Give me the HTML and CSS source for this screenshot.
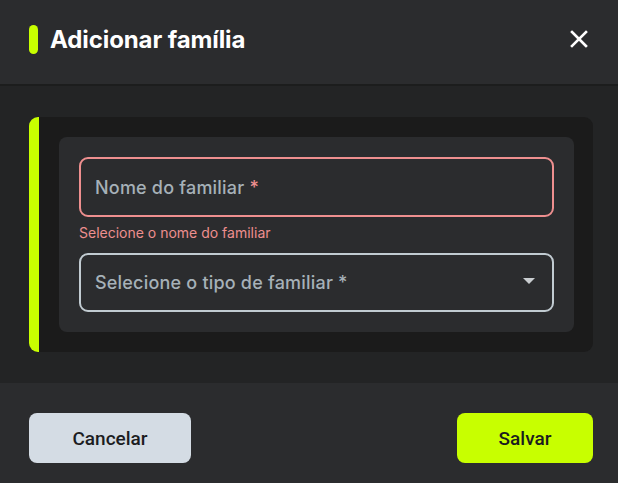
FILE: index.html
```html
<!DOCTYPE html>
<html lang="pt-BR">
<head>
<meta charset="utf-8">
<title>Adicionar família</title>
<link rel="stylesheet" href="styles.css">
</head>
<body>
<div class="dialog">
  <header class="dialog-header">
    <div class="title-wrap">
      <span class="title-pill"></span>
      <h1 class="title">Adicionar família</h1>
    </div>
    <button class="close-btn" aria-label="Fechar">
      <svg width="18" height="18" viewBox="0 0 18 18"><path d="M2 2 L16 16 M16 2 L2 16" stroke="#ffffff" stroke-width="2.6" stroke-linecap="square" fill="none"/></svg>
    </button>
  </header>
  <main class="dialog-body">
    <section class="card">
      <div class="panel">
        <div class="field field-error">
          <span class="field-label">Nome do familiar <span class="req">*</span></span>
        </div>
        <p class="helper">Selecione o nome do familiar</p>
        <div class="field field-select">
          <span class="field-label">Selecione o tipo de familiar *</span>
          <span class="caret"></span>
        </div>
      </div>
    </section>
  </main>
  <footer class="dialog-footer">
    <button class="btn btn-cancel">Cancelar</button>
    <button class="btn btn-save">Salvar</button>
  </footer>
</div>
</body>
</html>
```
FILE: styles.css
```css
* { box-sizing: border-box; }
html, body { margin: 0; padding: 0; }
body {
  width: 618px;
  height: 483px;
  background: #2b2c2e;
  font-family: Inter, "Noto Sans", sans-serif;
  overflow: hidden;
}
.dialog { display: flex; flex-direction: column; height: 483px; }
.dialog-header {
  height: 86px;
  background: #2b2c2e;
  border-bottom: 2px solid #1c1d1d;
  display: flex;
  align-items: center;
  justify-content: space-between;
  padding: 0 30px 6px 29px;
}
.title-wrap { display: flex; align-items: center; gap: 12px; }
.title-pill {
  width: 9px;
  height: 29px;
  border-radius: 5px;
  background: #c8ff00;
}
.title {
  margin: 0;
  color: #ffffff;
  font-size: 24px;
  font-weight: 700;
  letter-spacing: -0.1px;
}
.close-btn {
  background: none;
  border: 0;
  padding: 0;
  width: 18px;
  height: 18px;
  display: flex;
}
.dialog-body {
  height: 297px;
  background: #232425;
  padding: 31px 25px 30px 29px;
}
.card {
  background: #1b1b1b;
  border-left: 10px solid #c8ff00;
  border-radius: 9px;
  padding: 20px 19px 20px 20px;
}
.panel {
  background: #2b2c2e;
  border-radius: 8px;
  padding: 20px;
}
.field {
  height: 60px;
  border-radius: 9px;
  border: 2px solid #ee8f8f;
  display: flex;
  align-items: center;
  padding: 0 17px 0 14px;
  justify-content: space-between;
}
.field-label {
  color: #a6b1b8;
  font-size: 18px;
  font-weight: 500;
  letter-spacing: 0.2px;
}
.req { color: #ee8f8f; }
.helper {
  margin: 0;
  height: 36px;
  padding-top: 7px;
  color: #ee8f8f;
  font-size: 14px;
  line-height: 18px;
}
.field-select {
  height: 59px;
  border-color: #c1cbd1;
}
.caret {
  width: 0;
  height: 0;
  border-left: 6px solid transparent;
  border-right: 6px solid transparent;
  border-top: 6px solid #c9cdd0;
  margin-top: -3px;
}
.dialog-footer {
  height: 100px;
  background: #2b2c2e;
  display: flex;
  align-items: flex-start;
  justify-content: space-between;
  padding: 30px 25px 0 29px;
}
.btn {
  height: 50px;
  border: 0;
  border-radius: 8px;
  font-family: Roboto, "Noto Sans", sans-serif;
  font-size: 19px;
  font-weight: 500;
  color: #1c1d1f;
}
.btn-cancel { width: 162px; background: #d4dce4; }
.btn-save { width: 136px; background: #c8ff00; }
```
